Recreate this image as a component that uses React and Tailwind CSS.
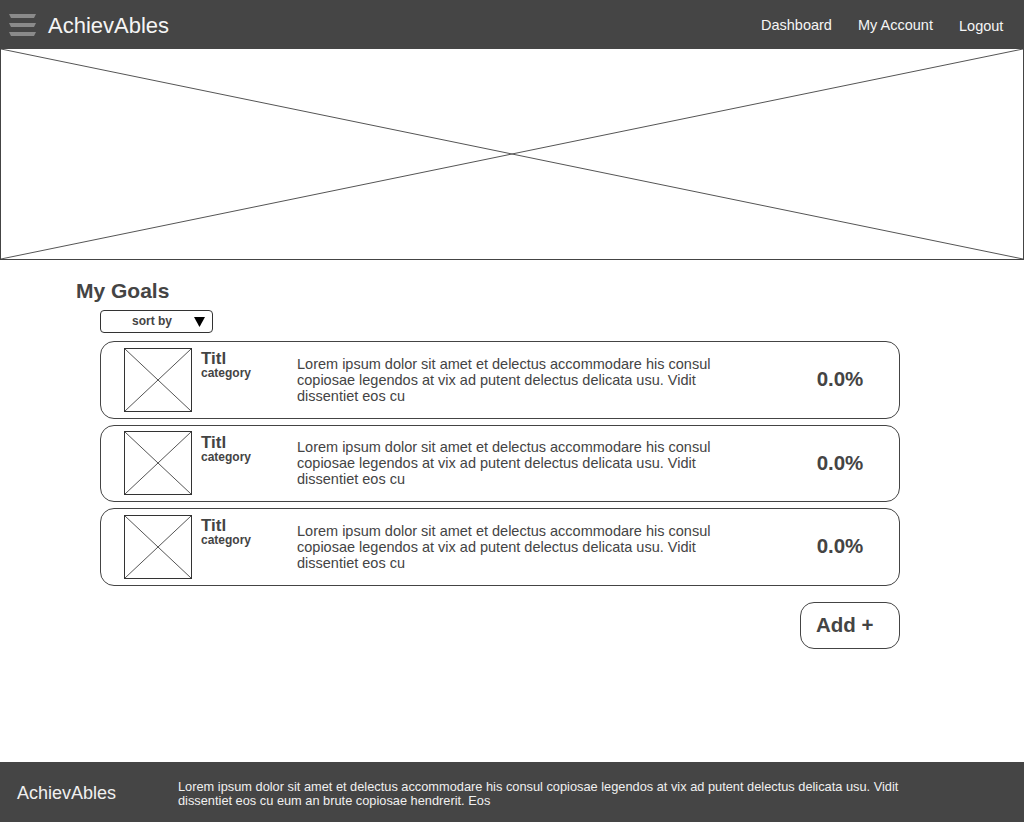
const Cross = ({ className }) => (
  <svg className={className} viewBox="0 0 100 100" preserveAspectRatio="none">
    <line x1="0" y1="0" x2="100" y2="100" stroke="#555" strokeWidth="1" vectorEffect="non-scaling-stroke" />
    <line x1="0" y1="100" x2="100" y2="0" stroke="#555" strokeWidth="1" vectorEffect="non-scaling-stroke" />
  </svg>
);

const desc =
  'Lorem ipsum dolor sit amet et delectus accommodare his consul copiosae legendos at vix ad putent delectus delicata usu. Vidit dissentiet eos cu';

const GoalCard = () => (
  <div className="flex h-[77.5px] w-[800px] items-center rounded-[14px] border border-[#444] bg-white pl-[23px]">
    <div className="h-[64px] w-[68px] shrink-0 border border-[#333]">
      <Cross className="block h-full w-full" />
    </div>
    <div className="ml-[9px] w-[96px] shrink-0 self-start pt-[8px]">
      <div className="text-[17px] font-bold leading-[17px] text-[#444]">Titl</div>
      <div className="text-[12px] font-bold leading-[12px] text-[#444]">category</div>
    </div>
    <p className="w-[440px] shrink-0 text-[14.5px] leading-[16px] text-[#444]">{desc}</p>
    <div className="ml-auto mr-[11px] w-[96px] text-center text-[20.5px] font-bold text-[#444]">0.0%</div>
  </div>
);

export default function App() {
  return (
    <div className="flex min-h-screen flex-col bg-white font-['Liberation_Sans',Arial,sans-serif]">
      {/* Header */}
      <header className="flex h-[49px] shrink-0 items-center bg-[#454545] text-[#f5f5f5]">
        <svg className="ml-[9px] h-[24px] w-[27px]" viewBox="0 0 27 24">
          <polygon points="0,1 27,1 25,5 2,5" fill="#8a8a8a" />
          <polygon points="0,10 27,10 25,14 2,14" fill="#8a8a8a" />
          <polygon points="0,19 27,19 25,23 2,23" fill="#8a8a8a" />
        </svg>
        <div className="ml-[12px] pt-[2px] text-[22px] leading-none">AchievAbles</div>
        <nav className="ml-auto flex items-center text-[14.5px]">
          <span className="w-[97px] pt-[2px]">Dashboard</span>
          <span className="w-[101px] pt-[2px]">My Account</span>
          <span className="w-[65px] pt-[4px]">Logout</span>
        </nav>
      </header>

      {/* Hero placeholder */}
      <div className="h-[211px] shrink-0 border-x border-b border-[#444]">
        <Cross className="block h-full w-full" />
      </div>

      {/* Main */}
      <main className="flex-1 pl-[76px] pt-[19px]">
        <h2 className="text-[21px] font-bold leading-[24px] text-[#444]">My Goals</h2>
        <div className="ml-[24px] mt-[7px] flex h-[23px] w-[113px] items-center rounded-[4px] border border-[#333]">
          <span className="ml-[31px] pb-[1px] text-[12px] font-bold text-[#444]">sort by</span>
          <svg className="ml-auto mr-[7px] h-[10px] w-[11px]" viewBox="0 0 11 10">
            <polygon points="0,0 11,0 5.5,10" fill="#000" />
          </svg>
        </div>
        <div className="ml-[24px] mt-[8px] flex flex-col gap-[6px]">
          <GoalCard />
          <GoalCard />
          <GoalCard />
        </div>
        <div className="ml-[724px] mt-[16px] flex h-[47px] w-[100px] items-center rounded-[14px] border border-[#444] pl-[15px] text-[20.5px] font-bold text-[#444]">
          Add +
        </div>
      </main>

      {/* Footer */}
      <footer className="flex h-[60px] shrink-0 items-center bg-[#454545] pt-[3px] text-[#f0f0f0]">
        <div className="ml-[17px] w-[161px] text-[18px]">AchievAbles</div>
        <p className="w-[730px] text-[12.8px] leading-[14px]">
          Lorem ipsum dolor sit amet et delectus accommodare his consul copiosae legendos at vix ad putent delectus delicata usu. Vidit dissentiet eos cu eum an brute copiosae hendrerit. Eos
        </p>
      </footer>
    </div>
  );
}
